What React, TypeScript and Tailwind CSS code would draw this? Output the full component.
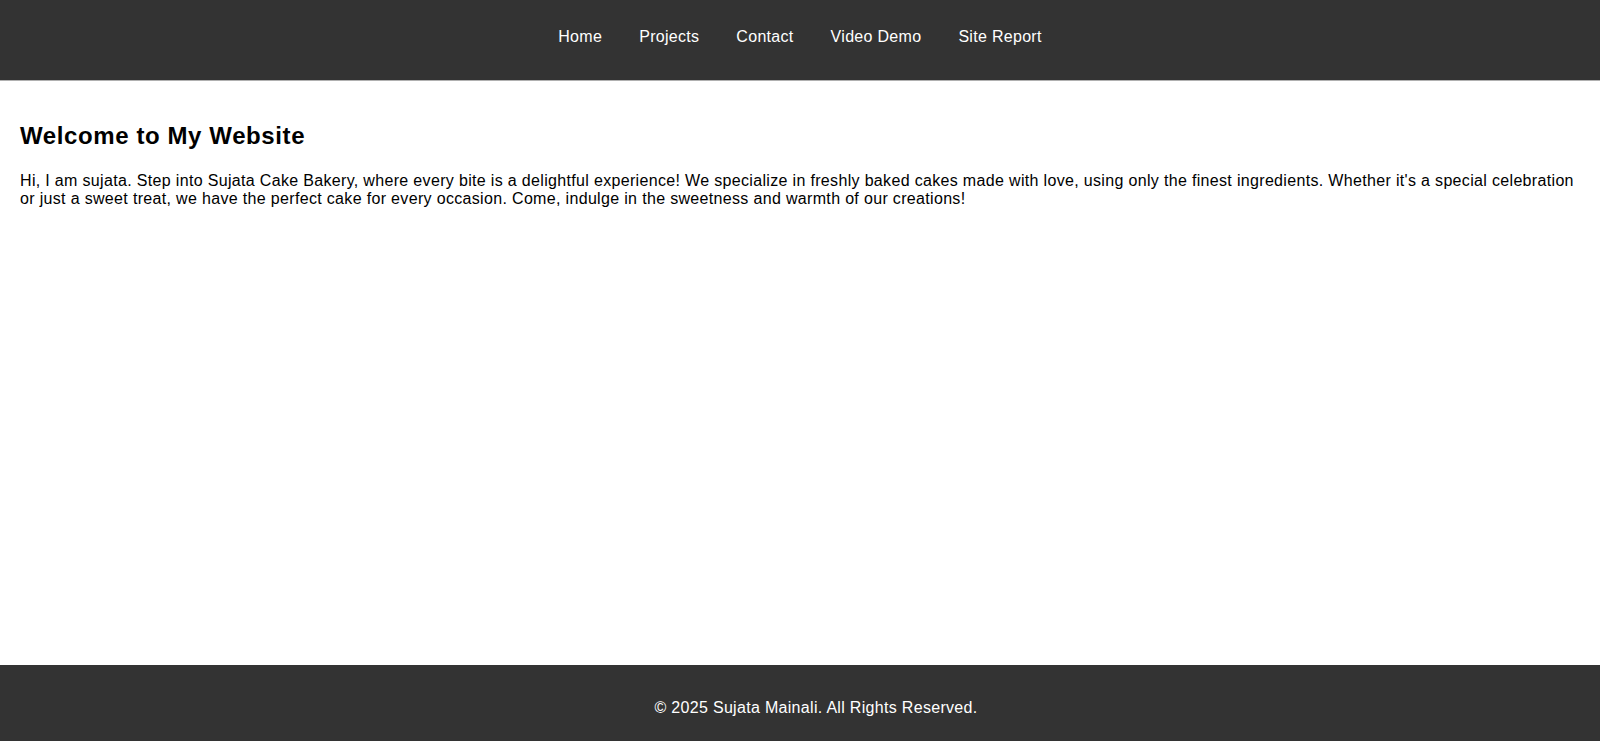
export default function App() {
  const links = ["Home", "Projects", "Contact", "Video Demo", "Site Report"];
  return (
    <div className="min-h-[741px] flex flex-col bg-white text-black" style={{ fontFamily: '"Liberation Sans", Arial, sans-serif' }}>
      <header className="h-[81px] bg-[#333333] border-b border-[#b0b0b0] flex items-center justify-center">
        <nav className="flex items-center gap-[37px] -mt-[7px]">
          {links.map((l) => (
            <a key={l} href="#" className="text-white text-[16px] leading-[18px] tracking-[0.3px]">
              {l}
            </a>
          ))}
        </nav>
      </header>
      <main className="flex-1 px-[20px] pt-[41px]">
        <h2 className="text-[24px] font-bold leading-[28px] tracking-[0.6px]">Welcome to My Website</h2>
        <p className="mt-[22px] text-[16px] leading-[18.4px] tracking-[0.33px]">
          Hi, I am sujata. Step into Sujata Cake Bakery, where every bite is a delightful experience! We specialize in freshly baked cakes made with love, using only the finest ingredients. Whether it's a special celebration or just a sweet treat, we have the perfect cake for every occasion. Come, indulge in the sweetness and warmth of our creations!
        </p>
      </main>
      <footer className="h-[76px] bg-[#333333] text-white flex justify-center pt-[34px] pl-[32px]">
        <p className="text-[16px] leading-[18px] tracking-[0.31px]">© 2025 Sujata Mainali. All Rights Reserved.</p>
      </footer>
    </div>
  );
}
